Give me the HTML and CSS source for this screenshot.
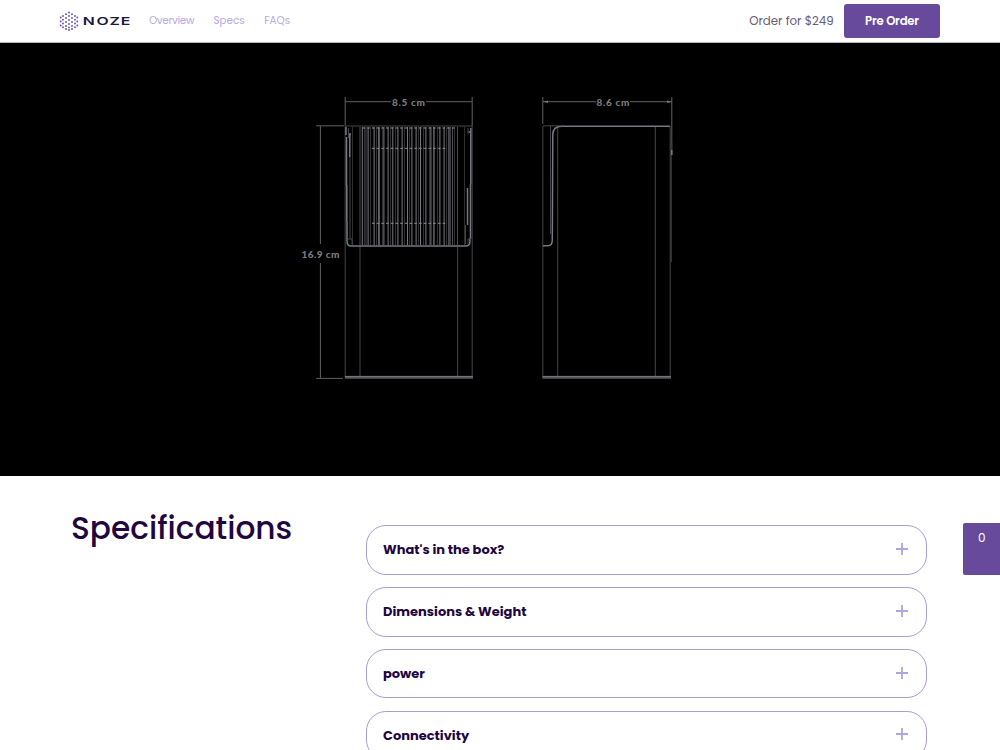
FILE: index.html
```html
<!DOCTYPE html>
<html lang="en">
<head>
<meta charset="utf-8">
<title>Noze Specs</title>
<link rel="stylesheet" href="styles.css">
</head>
<body>
<header class="nav">
  <svg class="logo" width="72" height="22" viewBox="0 0 72 22" role="img">
    <g class="logo-dots">
      <path d="M10 2.5v0M7 4.2v0M13 4.2v0M4 6v0M16 6v0M10 6v0M1.7 7.5v0M18.3 7.5v0M7 8v0M13 8v0M4 9.7v0M16 9.7v0M10 10v0M1.7 11.5v0M18.3 11.5v0M7 12v0M13 12v0M4 13.5v0M16 13.5v0M10 14v0M1.7 15.5v0M18.3 15.5v0M7 16v0M13 16v0M4 17.3v0M16 17.3v0M10 20v0M7 19v0M13 19v0M10 17.4v0"/>
    </g>
    <text class="logo-name" transform="translate(0 15) scale(1.5 1)" x="15.9 25 33.6 41.2" y="0">NOZE</text>
  </svg>
  <nav class="links"><a class="overview">Overview</a><a>Specs</a><a>FAQs</a></nav>
  <span class="price">Order for $249</span>
  <a class="btn">Pre Order</a>
</header>
<section class="stage">
  <svg width="1000" height="433" viewBox="0 43 1000 433">
    <g class="dim-line">
      <path d="M345.2 97v29M472.2 97v29M345 101.7h46M426 101.7h46M316 125.8h28M320.4 126v118M320.4 263v115M316 378.4h27"/>
      <path d="M542.8 97v27M671.8 97v45M543 101.7h53M630 101.7h42"/>
      <path class="arrow" d="M543 101.7l5-1.3v2.6zM672 101.7l-5-1.3v2.6z"/>
    </g>
    <g class="dim-text">
      <text x="392" y="106" textLength="33">8.5 cm</text>
      <text x="596.5" y="106" textLength="33">8.6 cm</text>
      <text x="301.5" y="257.5" textLength="38">16.9 cm</text>
    </g>
    <g class="edge">
      <path d="M345.2 126v252M360 246v132M457.6 246v132M472.2 126v252"/>
      <path d="M542.8 126v252M557.7 126v252M655.3 126v252M670.2 126v252M550.5 126v108"/>
    </g>
    <path class="grill-dim" d="M352.5 127v118M364.5 127v118M367.5 127v118M370.5 127v118M373.5 127v118M376.5 127v118M379.5 127v118M382.5 127v118M384.5 127v118M387.5 127v118M390.5 127v118M395.5 127v118M398.5 127v118M401.5 127v118M404.5 127v118M409.5 127v118M412.5 127v118M415.5 127v118M418.5 127v118M423.5 127v118M426.5 127v118M429.5 127v118M431.5 127v118M434.5 127v118M437.5 127v118M440.5 127v118M443.5 127v118M446.5 127v118M454.5 127v118M464.5 127v118"/>
    <path class="grill-mid" d="M360 127v118M366 127v118M368.5 127v118M374.5 127v118M378.5 127v118M383.5 127v118M388.5 127v118M397.5 127v118M402.5 127v118M411.5 127v118M416.5 127v118M425.5 127v118M430.5 127v118M439.5 127v118M444.5 127v118M448.5 127v118M452.5 127v118M457.5 127v118"/>
    <path class="grill-lit" d="M362.3 127v118M379 127v118M392.8 127v118M407.5 127v118M420.5 127v118M433.8 127v118M450 127v118"/>
    <path class="dash" d="M362.5 128h94"/>
    <path class="dash" d="M372 148.3h74M372 223.3h74"/>
    <path class="edge" d="M345 126h127"/>
    <path class="rim" d="M346 127v8M346.5 137v48M346.8 185v37M347 222v19q0 5 4 5h115q4 0 4-5v-3M470.8 128v56M349.8 134v23M348 134h3M468.5 132h3M467.5 188v37M470.5 184v55"/>
    <path class="edge" d="M348.5 128v10M350 157v82M348 239h4v5M468 128v6M465.5 225v19M468 244v-5h3"/>
    <path class="rim" d="M543 245.8h5q4.3 0 4.3-6l.5-105q0-8.5 9-8.5h108"/>
    <path class="edge" d="M543 125.8h20M671.2 142v120M672 142v13"/>
    <path class="rim" d="M671.7 150v5"/>
    <path class="base" d="M345 377.3h128M542.5 377.3h128.5"/>
    <path class="base-top" d="M345 376.4h128M542.5 376.4h128.5"/>
  </svg>
</section>
<main class="specs">
  <h1>Specifications</h1>
  <div class="list">
    <div class="item"><span>What's in the box?</span><svg class="plus" width="12" height="12" viewBox="0 0 12 12"><path d="M6 0v12M0 6h12"/></svg></div>
    <div class="item"><span>Dimensions &amp; Weight</span><svg class="plus" width="12" height="12" viewBox="0 0 12 12"><path d="M6 0v12M0 6h12"/></svg></div>
    <div class="item"><span>power</span><svg class="plus" width="12" height="12" viewBox="0 0 12 12"><path d="M6 0v12M0 6h12"/></svg></div>
    <div class="item"><span>Connectivity</span><svg class="plus" width="12" height="12" viewBox="0 0 12 12"><path d="M6 0v12M0 6h12"/></svg></div>
  </div>
</main>
<aside class="cart">0</aside>
</body>
</html>
```

FILE: styles.css
```css
* { box-sizing: border-box; }
body { margin: 0; height: 750px; overflow: hidden; position: relative; background: #fff; color: #210640; font-family: Poppins, Inter, sans-serif; }
.nav { height: 43px; padding: 4px 60px 0 59px; display: flex; align-items: flex-start; border-bottom: 1px solid #b4b4bc; }
.logo { margin-top: 6px; }
.logo-dots { fill: none; stroke: #6b50ab; stroke-width: 1.9; stroke-linecap: round; }
.logo-name { font: 600 10.6px Inter, sans-serif; fill: #1d1740; }
.links { display: flex; margin-left: 18px; gap: 19.5px; font-size: 10.4px; line-height: 33px; color: #b8a8e3; }
.overview { width: 45px; letter-spacing: -.32px; white-space: nowrap; }
.price { margin-left: auto; font-size: 11.8px; line-height: 34px; color: #685c7a; }
.btn { width: 96px; height: 34px; margin-left: 10.4px; border-radius: 3px; background: #674a9b; color: #fff; font-size: 11.7px; font-weight: 600; line-height: 34px; text-align: center; letter-spacing: -.2px; }
.stage { height: 433px; background: #000; }
.stage svg { display: block; }
.stage path { fill: none; }
.dim-line { stroke: #626264; stroke-width: 1; }
.stage .arrow { fill: #777; stroke: none; }
.dim-text { font: 900 10px Lato, sans-serif; fill: #7c7c7c; }
.edge { stroke: #45464b; stroke-width: 1; }
.grill-dim { stroke: #303033; stroke-width: 1; }
.grill-mid { stroke: #4a4a4f; stroke-width: 1; }
.grill-lit { stroke: #77787f; stroke-width: 1; }
.dash { stroke: #8d8e94; stroke-width: 1; stroke-dasharray: 2.7 2; }
.rim { stroke: #777981; stroke-width: 1.5; }
.base { stroke: #53565a; stroke-width: 2.8; }
.base-top { stroke: #777b80; stroke-width: 1; }
.specs { display: flex; padding-left: 71px; }
h1 { width: 295.4px; margin: 28px 0 0; font-size: 31.2px; line-height: 48px; font-weight: 500; }
.list { width: 560.6px; padding-top: 49.4px; display: flex; flex-direction: column; gap: 12.4px; }
.item { height: 49.4px; flex: none; display: flex; align-items: center; justify-content: space-between; padding: 0 18px 2px 15.6px; border: 1px solid #aa9bd0; border-radius: 20px; font-size: 13px; font-weight: 700; }
.item span { padding-top: 2.4px; }
.plus { fill: none; stroke: #b2a4e1; stroke-width: 1.8; }
.cart { position: absolute; top: 523.4px; right: 0; width: 36.6px; height: 52px; padding-top: 5.5px; border-radius: 2px 0 0 2px; background: #674a9b; color: #fff; font-size: 12px; line-height: 18px; text-align: center; }
```
